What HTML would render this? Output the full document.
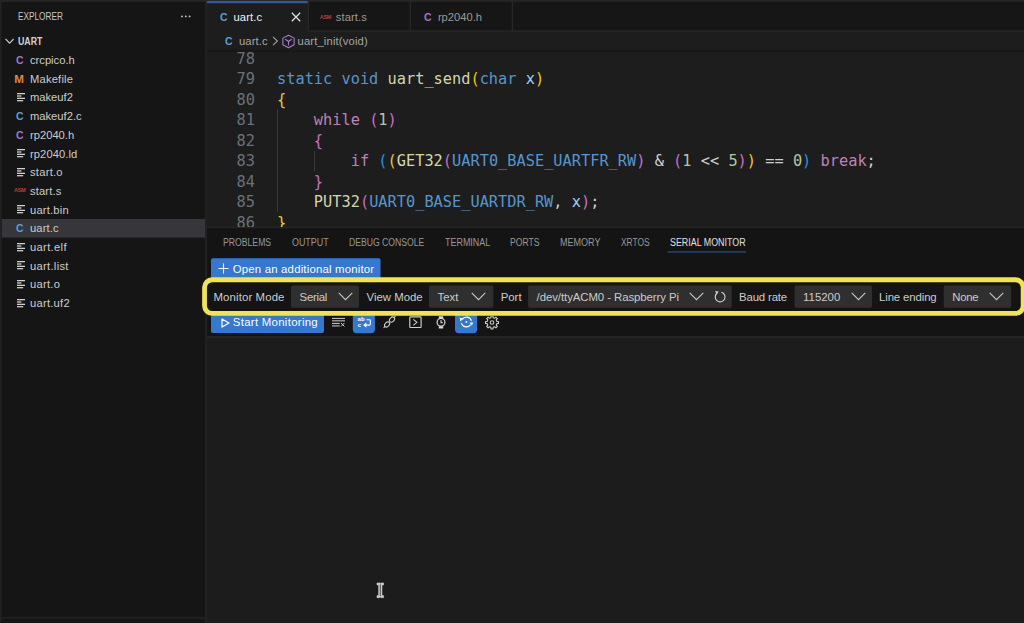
<!DOCTYPE html>
<html lang="en">
<head>
<meta charset="utf-8">
<title>uart.c - UART - Serial Monitor</title>
<style>
*{box-sizing:border-box;margin:0;padding:0}
html,body{width:1024px;height:623px;overflow:hidden;background:#1d1d1d}
body{position:relative;font-family:"Liberation Sans","DejaVu Sans",sans-serif;font-size:11px;color:#cccccc}
.abs{position:absolute}
#bg{left:0;top:0}
#side-title{left:18px;top:11px;font-size:10px;transform:translateY(.4px) scaleX(.826);transform-origin:0 50%;color:#c8c8c8;line-height:12px}
#side-root{left:18px;top:36px;font-size:10px;font-weight:bold;transform:translateY(.45px) scaleX(.881);transform-origin:0 50%;color:#d2d2d2;line-height:12px}
.row{position:absolute;left:1.6px;width:203.4px;height:18.7px;line-height:18.7px;font-size:11.2px;color:#cccccc;white-space:nowrap}
.row .lbl{position:absolute;left:28.4px;top:.6px}
.ic{position:absolute;top:.4px;font-weight:bold;font-size:11.6px;transform:scaleX(.9);transform-origin:0 50%}
.row .ic{left:14.6px}
.ic.c{color:#5a9fd6}.ic.h{color:#a673cc}.ic.m{color:#e0883c;transform:none}
.asm{position:absolute;top:0;font-weight:bold;font-size:5.6px;letter-spacing:-.35px;color:#b8403a}
.fi{position:absolute;left:15.6px;top:5.2px}
.tab{position:absolute;top:1.9px;height:29.9px;font-size:11.2px;line-height:30px;color:#9a9a9a;white-space:nowrap}
.tab.active{color:#f2f2f2}
.tab .lbl{position:absolute;top:0}
#crumbs{left:206.5px;top:31.8px;width:818px;height:18.6px;font-size:11.2px;line-height:18.6px;color:#a6a6a6;white-space:nowrap}
#code{left:206px;top:49px;width:818px;height:178px;overflow:hidden;font-family:"DejaVu Sans Mono","Liberation Mono",monospace;font-size:15.3px;line-height:20.4px;white-space:pre;color:#d0d0d0}
.ln{position:absolute;left:0;width:49px;text-align:right;color:#69717b}
.cl{position:absolute;left:71px}
.k{color:#5596cf}.f{color:#d6d6a8}.c{color:#bd82b8}.v{color:#98d4f4}.n{color:#b0c8a4}
.b1{color:#ecc920}.b2{color:#cb6cc8}.b3{color:#2593e8}
.guide{position:absolute;width:1px;background:#3a3a3a}
.ptab{position:absolute;top:237.2px;font-size:10px;line-height:12px;color:#989898;white-space:nowrap;transform-origin:0 50%}
.ptab.on{color:#e0e0e0}
.btxt{position:absolute;color:#ffffff;font-size:11.4px;white-space:nowrap;line-height:14px}
.lab{position:absolute;top:290px;font-size:11.4px;line-height:14px;color:#cccccc;white-space:nowrap}
.stxt{position:absolute;top:289.6px;font-size:11.4px;line-height:14px;color:#cccccc;white-space:nowrap}
</style>
</head>
<body>
<svg class="abs" id="bg" width="1024" height="623" viewBox="0 0 1024 623"><defs><linearGradient id="sh" x1="0" y1="0" x2="0" y2="1"><stop offset="0" stop-color="#161616"/><stop offset="0.7" stop-color="#191919"/><stop offset="1" stop-color="#1d1d1d"/></linearGradient></defs>
<rect x="0" y="0" width="205.2" height="623" fill="#151515"/>
<rect x="1.6" y="219" width="203.6" height="18.6" fill="#36363b"/>
<rect x="1.6" y="617.2" width="203.6" height="1.3" fill="#262626"/>
<rect x="206.8" y="0" width="817.2" height="30.5" fill="#161616"/>
<rect x="206.8" y="30.4" width="817.2" height="1.4" fill="#272727"/>
<rect x="206.8" y="1.9" width="101.5" height="29.9" fill="#1d1d1d"/>
<rect x="307.6" y="1.9" width="1.4" height="29.5" fill="#272727"/>
<rect x="409.7" y="1.9" width="1.4" height="29.5" fill="#272727"/>
<rect x="511.7" y="1.9" width="1.4" height="29.5" fill="#272727"/>
<rect x="0" y="0" width="1024" height="1.9" fill="#252525"/>
<rect x="206.8" y="0.9" width="100.8" height="2.3" fill="#2d5d9a"/>
<rect x="0" y="0" width="1.6" height="623" fill="#222222"/>
<rect x="206.8" y="49.9" width="818" height="3" fill="url(#sh)"/>
<rect x="206.8" y="228" width="817.2" height="108.3" fill="#141414"/>
<rect x="206.8" y="226.7" width="817.2" height="1.6" fill="#252525"/>
<rect x="206.8" y="336.2" width="817.2" height="1.8" fill="#262626"/>
<rect x="206.8" y="338" width="817.2" height="285" fill="#1c1c1c"/>
<rect x="205.2" y="1.9" width="1.6" height="621.1" fill="#232323"/>
<rect x="667.5" y="251.4" width="78.5" height="1.1" fill="#2b5892"/>
<rect x="211" y="258.2" width="169.5" height="21.3" rx="2" fill="#3478d2"/>
<rect x="211" y="312" width="113" height="21.1" rx="2" fill="#3478d2"/>
<path d="M352.8 312 H374.9 V329.3 a4 4 0 0 1 -4 4 H356.8 a4 4 0 0 1 -4 -4 Z" fill="#3478d2"/>
<path d="M455 312 H477.1 V329.3 a4 4 0 0 1 -4 4 H459 a4 4 0 0 1 -4 -4 Z" fill="#3478d2"/>
<rect x="291" y="285.6" width="68" height="22.2" rx="1.8" fill="#2f2f2f"/>
<rect x="428.9" y="285.6" width="64.4" height="22.2" rx="1.8" fill="#2f2f2f"/>
<rect x="528.1" y="285.6" width="203.7" height="22.2" rx="1.8" fill="#2f2f2f"/>
<rect x="794.6" y="285.6" width="77.4" height="22.2" rx="1.8" fill="#2f2f2f"/>
<rect x="943.7" y="285.6" width="67.5" height="22.2" rx="1.8" fill="#2f2f2f"/>
<rect x="204.55" y="279.75" width="818.6" height="33.7" rx="7.6" fill="none" stroke="#f1e54a" stroke-width="4.8"/>
</svg>
<div class="abs" id="side-title">EXPLORER</div>
<svg class="abs" style="left:180px;top:14px" width="12" height="5" viewBox="0 0 12 5"><g fill="#c4c4c4"><circle cx="2" cy="2.4" r="0.95"/><circle cx="5.8" cy="2.4" r="0.95"/><circle cx="9.6" cy="2.4" r="0.95"/></g></svg>
<div class="abs" id="side-root">UART</div>
<svg class="abs" style="left:5px;top:38px" width="10" height="7" viewBox="0 0 10 7"><path d="M0.6 1 L4.6 5.2 L8.6 1" fill="none" stroke="#c8c8c8" stroke-width="1.1"/></svg>
<div class="row" style="top:50.50px"><span class="ic h">C</span><span class="lbl">crcpico.h</span></div>
<div class="row" style="top:69.20px"><span class="ic m" style="left:12.7px">M</span><span class="lbl" style="letter-spacing:0.19px">Makefile</span></div>
<div class="row" style="top:87.90px"><svg class="fi" width="9" height="9" viewBox="0 0 9 9"><g fill="#d0d0d0"><rect x="0" y="0" width="8" height="1.3"/><rect x="0" y="2.35" width="4.4" height="1.3"/><rect x="0" y="4.7" width="8" height="1.3"/><rect x="0" y="7.05" width="6.2" height="1.3"/></g></svg><span class="lbl">makeuf2</span></div>
<div class="row" style="top:106.60px"><span class="ic c">C</span><span class="lbl">makeuf2.c</span></div>
<div class="row" style="top:125.30px"><span class="ic h">C</span><span class="lbl">rp2040.h</span></div>
<div class="row" style="top:144.00px"><svg class="fi" width="9" height="9" viewBox="0 0 9 9"><g fill="#d0d0d0"><rect x="0" y="0" width="8" height="1.3"/><rect x="0" y="2.35" width="4.4" height="1.3"/><rect x="0" y="4.7" width="8" height="1.3"/><rect x="0" y="7.05" width="6.2" height="1.3"/></g></svg><span class="lbl" style="letter-spacing:0.08px">rp2040.ld</span></div>
<div class="row" style="top:162.70px"><svg class="fi" width="9" height="9" viewBox="0 0 9 9"><g fill="#d0d0d0"><rect x="0" y="0" width="8" height="1.3"/><rect x="0" y="2.35" width="4.4" height="1.3"/><rect x="0" y="4.7" width="8" height="1.3"/><rect x="0" y="7.05" width="6.2" height="1.3"/></g></svg><span class="lbl" style="letter-spacing:0.25px">start.o</span></div>
<div class="row" style="top:181.40px"><span class="asm" style="left:12.4px">ASM</span><span class="lbl" style="letter-spacing:0.15px">start.s</span></div>
<div class="row" style="top:200.10px"><svg class="fi" width="9" height="9" viewBox="0 0 9 9"><g fill="#d0d0d0"><rect x="0" y="0" width="8" height="1.3"/><rect x="0" y="2.35" width="4.4" height="1.3"/><rect x="0" y="4.7" width="8" height="1.3"/><rect x="0" y="7.05" width="6.2" height="1.3"/></g></svg><span class="lbl" style="letter-spacing:0.20px">uart.bin</span></div>
<div class="row" style="top:218.80px"><span class="ic c">C</span><span class="lbl" style="letter-spacing:0.15px">uart.c</span></div>
<div class="row" style="top:237.50px"><svg class="fi" width="9" height="9" viewBox="0 0 9 9"><g fill="#d0d0d0"><rect x="0" y="0" width="8" height="1.3"/><rect x="0" y="2.35" width="4.4" height="1.3"/><rect x="0" y="4.7" width="8" height="1.3"/><rect x="0" y="7.05" width="6.2" height="1.3"/></g></svg><span class="lbl" style="letter-spacing:0.33px">uart.elf</span></div>
<div class="row" style="top:256.20px"><svg class="fi" width="9" height="9" viewBox="0 0 9 9"><g fill="#d0d0d0"><rect x="0" y="0" width="8" height="1.3"/><rect x="0" y="2.35" width="4.4" height="1.3"/><rect x="0" y="4.7" width="8" height="1.3"/><rect x="0" y="7.05" width="6.2" height="1.3"/></g></svg><span class="lbl" style="letter-spacing:0.30px">uart.list</span></div>
<div class="row" style="top:274.90px"><svg class="fi" width="9" height="9" viewBox="0 0 9 9"><g fill="#d0d0d0"><rect x="0" y="0" width="8" height="1.3"/><rect x="0" y="2.35" width="4.4" height="1.3"/><rect x="0" y="4.7" width="8" height="1.3"/><rect x="0" y="7.05" width="6.2" height="1.3"/></g></svg><span class="lbl" style="letter-spacing:0.27px">uart.o</span></div>
<div class="row" style="top:293.60px"><svg class="fi" width="9" height="9" viewBox="0 0 9 9"><g fill="#d0d0d0"><rect x="0" y="0" width="8" height="1.3"/><rect x="0" y="2.35" width="4.4" height="1.3"/><rect x="0" y="4.7" width="8" height="1.3"/><rect x="0" y="7.05" width="6.2" height="1.3"/></g></svg><span class="lbl" style="letter-spacing:0.25px">uart.uf2</span></div>
<div class="tab active" style="left:206.5px;width:102.8px"><span class="ic c" style="left:13.6px">C</span><span class="lbl" style="left:27px;letter-spacing:.12px">uart.c</span>
<svg class="abs" style="left:84.4px;top:10.4px" width="10" height="10" viewBox="0 0 10 10"><path d="M0.8 0.8 L9.2 9.2 M9.2 0.8 L0.8 9.2" stroke="#e2e2e2" stroke-width="1.25" fill="none"/></svg></div>
<div class="tab" style="left:309.3px;width:102.1px"><span class="asm" style="left:10.5px">ASM</span><span class="lbl" style="left:26.5px;letter-spacing:.1px">start.s</span></div>
<div class="tab" style="left:411.4px;width:102px"><span class="ic h" style="left:13px">C</span><span class="lbl" style="left:26.5px">rp2040.h</span></div>
<div class="abs" id="crumbs"><span class="ic c" style="left:18px">C</span><span class="abs" style="left:32.5px;top:0;letter-spacing:.1px">uart.c</span>
<svg class="abs" style="left:65px;top:4.6px" width="7" height="10" viewBox="0 0 7 10"><path d="M1 0.8 L5.4 5 L1 9.2" fill="none" stroke="#a0a0a0" stroke-width="1.1"/></svg>
<svg class="abs" style="left:74.3px;top:2.2px" width="15" height="15" viewBox="0 0 16 16"><path d="M8 1.3 L14 4.4 V11.4 L8 14.7 L2 11.4 V4.4 Z M4.6 5.6 L8 8 L11.4 5.6 M8 8 V12.2" fill="none" stroke="#ad7cd2" stroke-width="1.15" stroke-linejoin="round"/></svg>
<span class="abs" style="left:91px;top:0;letter-spacing:.17px">uart_init(void)</span></div>
<div class="abs" id="code">
<div class="ln" style="top:0.00px">78</div><div class="cl" style="top:0.00px"></div>
<div class="ln" style="top:20.45px">79</div><div class="cl" style="top:20.45px"><span class="k">static</span> <span class="k">void</span> <span class="f">uart_send</span><span class="b1">(</span><span class="k">char</span> <span class="v">x</span><span class="b1">)</span></div>
<div class="ln" style="top:40.90px">80</div><div class="cl" style="top:40.90px"><span class="b1">{</span></div>
<div class="ln" style="top:61.35px">81</div><div class="cl" style="top:61.35px">    <span class="c">while</span> <span class="b2">(</span><span class="n">1</span><span class="b2">)</span></div>
<div class="ln" style="top:81.80px">82</div><div class="cl" style="top:81.80px">    <span class="b2">{</span></div>
<div class="ln" style="top:102.25px">83</div><div class="cl" style="top:102.25px">        <span class="c">if</span> <span class="b3">(</span><span class="b1">(</span><span class="f">GET32</span><span class="b2">(</span><span class="k">UART0_BASE_UARTFR_RW</span><span class="b2">)</span> &amp; <span class="b2">(</span><span class="n">1</span> &lt;&lt; <span class="n">5</span><span class="b2">)</span><span class="b1">)</span> == <span class="n">0</span><span class="b3">)</span> <span class="c">break</span>;</div>
<div class="ln" style="top:122.70px">84</div><div class="cl" style="top:122.70px">    <span class="b2">}</span></div>
<div class="ln" style="top:143.15px">85</div><div class="cl" style="top:143.15px">    <span class="f">PUT32</span><span class="b2">(</span><span class="k">UART0_BASE_UARTDR_RW</span>, <span class="v">x</span><span class="b2">)</span>;</div>
<div class="ln" style="top:163.60px">86</div><div class="cl" style="top:163.60px"><span class="b1">}</span></div>
<div class="guide" style="left:71px;top:60px;height:103px"></div><div class="guide" style="left:108px;top:101.5px;height:20.5px"></div>
</div>
<div class="ptab" style="left:223.4px;transform:scaleX(0.866)">PROBLEMS</div>
<div class="ptab" style="left:291.9px;transform:scaleX(0.890)">OUTPUT</div>
<div class="ptab" style="left:348.5px;transform:scaleX(0.862)">DEBUG CONSOLE</div>
<div class="ptab" style="left:444.5px;transform:scaleX(0.895)">TERMINAL</div>
<div class="ptab" style="left:509.7px;transform:scaleX(0.865)">PORTS</div>
<div class="ptab" style="left:559.7px;transform:scaleX(0.902)">MEMORY</div>
<div class="ptab" style="left:620.7px;transform:scaleX(0.841)">XRTOS</div>
<div class="ptab on" style="left:669.6px;transform:scaleX(0.889)">SERIAL MONITOR</div>
<svg class="abs" style="left:218.3px;top:263.4px" width="11" height="11" viewBox="0 0 11 11"><path d="M5.5 0.5 V10.5 M0.5 5.5 H10.5" stroke="#ffffff" stroke-width="1.1" fill="none"/></svg>
<div class="btxt" style="left:232.8px;top:261.6px;letter-spacing:.18px">Open an additional monitor</div>
<svg class="abs" style="left:220.5px;top:317.6px" width="9" height="10" viewBox="0 0 9 10"><path d="M1 0.9 L8 5 L1 9.1 Z" stroke="#ffffff" stroke-width="1.2" fill="none" stroke-linejoin="round"/></svg>
<div class="btxt" style="left:232.8px;top:315px;letter-spacing:.3px">Start Monitoring</div>
<div class="lab" style="left:213.5px;letter-spacing:.12px">Monitor Mode</div>
<div class="stxt" style="left:299.6px;letter-spacing:-.3px">Serial</div>
<div class="lab" style="left:366.5px">View Mode</div>
<div class="stxt" style="left:437.6px">Text</div>
<div class="lab" style="left:500.7px">Port</div>
<div class="stxt" style="left:536.6px;letter-spacing:-.07px">/dev/ttyACM0 - Raspberry Pi</div>
<div class="lab" style="left:739px;letter-spacing:-.15px">Baud rate</div>
<div class="stxt" style="left:803.1px">115200</div>
<div class="lab" style="left:879px;letter-spacing:-.12px">Line ending</div>
<div class="stxt" style="left:952.3px;letter-spacing:-.3px">None</div>
<svg class="abs" style="left:337.7px;top:292.3px" width="15" height="9" viewBox="0 0 15 9"><path d="M0.7 0.8 L7.5 7.7 L14.3 0.8" fill="none" stroke="#c6c6c6" stroke-width="1.15"/></svg>
<svg class="abs" style="left:471.2px;top:292.3px" width="15" height="9" viewBox="0 0 15 9"><path d="M0.7 0.8 L7.5 7.7 L14.3 0.8" fill="none" stroke="#c6c6c6" stroke-width="1.15"/></svg>
<svg class="abs" style="left:689.4px;top:292.3px" width="15" height="9" viewBox="0 0 15 9"><path d="M0.7 0.8 L7.5 7.7 L14.3 0.8" fill="none" stroke="#c6c6c6" stroke-width="1.15"/></svg>
<svg class="abs" style="left:850.5px;top:292.3px" width="15" height="9" viewBox="0 0 15 9"><path d="M0.7 0.8 L7.5 7.7 L14.3 0.8" fill="none" stroke="#c6c6c6" stroke-width="1.15"/></svg>
<svg class="abs" style="left:989.4px;top:292.3px" width="15" height="9" viewBox="0 0 15 9"><path d="M0.7 0.8 L7.5 7.7 L14.3 0.8" fill="none" stroke="#c6c6c6" stroke-width="1.15"/></svg>
<svg class="abs" style="left:713px;top:290px" width="14" height="14" viewBox="713 290 14 14"><path d="M717.2 293 A4.9 4.9 0 1 0 721.4 292.2" fill="none" stroke="#d0d0d0" stroke-width="1.15"/><path d="M715.2 291.1 L718.8 291.6 L716.4 294.5 Z" fill="#d0d0d0"/></svg>
<svg class="abs" style="left:326px;top:316px" width="180" height="20" viewBox="326 316 180 20">
<g fill="none" stroke="#d0d0d0" stroke-width="1">
<path d="M332 318.4 H345 M332 320.85 H345 M332 323.45 H339.7 M332 325.95 H339.7"/>
<path d="M341 323 L344.4 326.4 M344.4 323 L341 326.4"/>
</g>
<text x="357.6" y="321" font-family="Liberation Sans, sans-serif" font-size="6" font-weight="bold" fill="#ffffff">ab</text>
<text x="357.8" y="326.7" font-family="Liberation Sans, sans-serif" font-size="6" font-weight="bold" fill="#ffffff">c</text>
<path d="M366.5 319.7 H369.4 a0.9 0.9 0 0 1 0.9 0.9 V324.2 a0.9 0.9 0 0 1 -0.9 0.9 H365.5" fill="none" stroke="#ffffff" stroke-width="1.1"/>
<path d="M363.2 325.1 L366.3 322.4 V327.8 Z" fill="#ffffff"/>
<g fill="none" stroke="#d0d0d0" stroke-width="1.05">
<path d="M383.5 328 L385.2 326.3 M394.1 317.5 L395.5 316.2"/>
<ellipse cx="387.1" cy="324.5" rx="2.9" ry="2.1" transform="rotate(-45 387.1 324.5)"/>
<ellipse cx="392" cy="319.6" rx="2.9" ry="2.1" transform="rotate(-45 392 319.6)"/>
<rect x="409.8" y="316.9" width="11.3" height="10.6" rx="0.8" stroke-width="1.15"/>
<path d="M413.3 319.3 L416.9 322.3 L413.3 325.3"/>
<circle cx="441" cy="322.3" r="3.9" stroke-width="1.25"/>
<path d="M441 320 V322.6 H442.8"/>
</g>
<path d="M438.8 316.3 H443.2 V318.4 H438.8 Z M438.8 326.2 H443.2 V328.4 H438.8 Z" fill="#d8d8d8"/>
<g fill="none" stroke="#ffffff" stroke-width="1.1">
<path d="M462.2 319.4 A5.1 5.1 0 0 1 471.4 320.9 M470.6 324.6 A5.1 5.1 0 0 1 461.4 323.1"/>
</g>
<path d="M459.6 317.8 L463.3 318.4 L460.4 321.4 Z M473.2 322.4 L469.6 322.6 L471.9 325.6 Z" fill="#ffffff"/>
<circle cx="466.4" cy="321.9" r="0.95" fill="#ffffff"/>
<path d="M498.52 321.47 L498.52 323.53 L496.76 323.64 L496.18 325.06 L497.34 326.38 L495.88 327.84 L494.56 326.68 L493.14 327.26 L493.03 329.02 L490.97 329.02 L490.86 327.26 L489.44 326.68 L488.12 327.84 L486.66 326.38 L487.82 325.06 L487.24 323.64 L485.48 323.53 L485.48 321.47 L487.24 321.36 L487.82 319.94 L486.66 318.62 L488.12 317.16 L489.44 318.32 L490.86 317.74 L490.97 315.98 L493.03 315.98 L493.14 317.74 L494.56 318.32 L495.88 317.16 L497.34 318.62 L496.18 319.94 L496.76 321.36 Z" fill="none" stroke="#d0d0d0" stroke-width="1.05" stroke-linejoin="round"/>
<circle cx="492" cy="322.5" r="1.8" fill="none" stroke="#d0d0d0" stroke-width="1.05"/>
</svg>
<svg class="abs" style="left:375px;top:581px" width="11" height="19" viewBox="375 581 11 19"><path d="M377 582.9 H379.6 L380.3 583.5 L381 582.9 H383.6 V585 H382 V595.6 H383.6 V597.7 H381 L380.3 597.1 L379.6 597.7 H377 V595.6 H378.6 V585 H377 Z" fill="#cdcdcd" stroke="#d6d6d6" stroke-width="0.5" stroke-linejoin="round"/><path d="M380.3 584.4 V596.2" stroke="#3c3c3c" stroke-width="0.9" fill="none"/></svg>
</body>
</html>
